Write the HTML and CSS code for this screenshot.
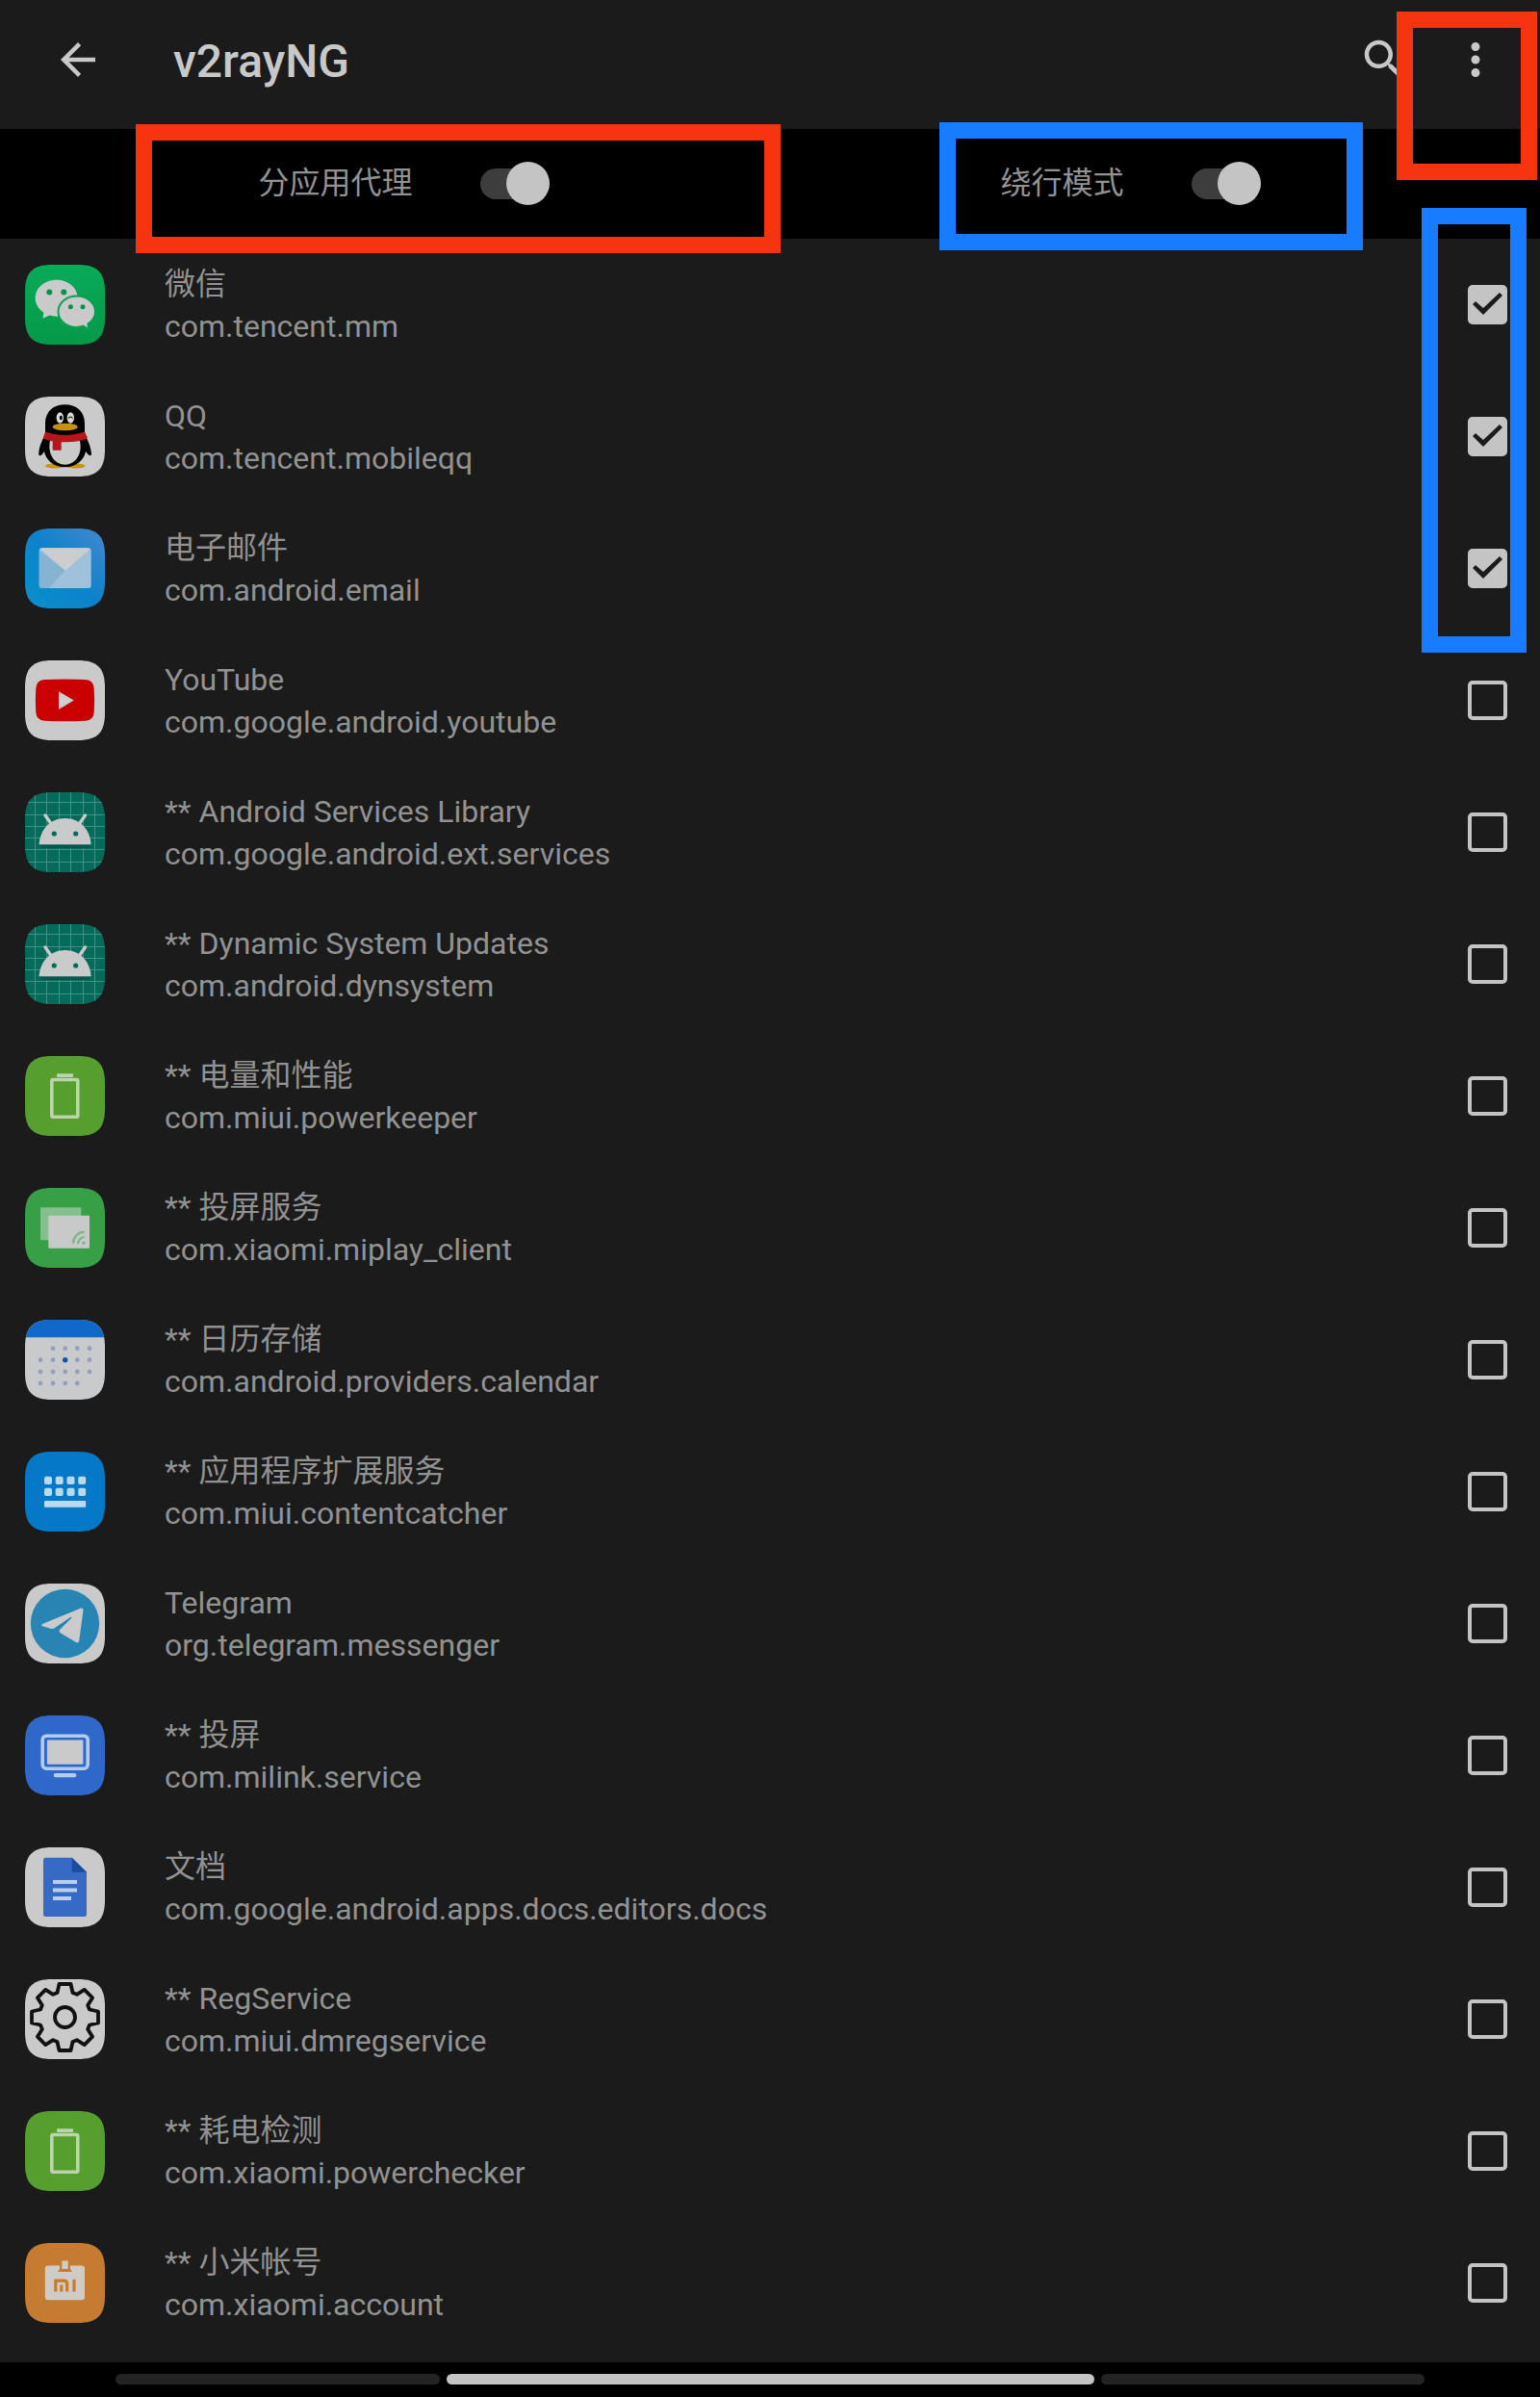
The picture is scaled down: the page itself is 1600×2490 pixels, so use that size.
FILE: index.html
```html
<!DOCTYPE html>
<html lang="zh-CN">
<head>
<meta charset="utf-8">
<meta name="viewport" content="width=device-width, initial-scale=1">
<title>v2rayNG</title>
<link rel="stylesheet" href="styles.css">
</head>
<body>
<svg class="defs" aria-hidden="true">
  <defs>
    <linearGradient id="wechat-bg" x1="0" y1="0" x2="0" y2="1"><stop offset="0" stop-color="#07ab58"/><stop offset="1" stop-color="#05994a"/></linearGradient>
    <linearGradient id="mail-bg" x1="0" y1="1" x2="1" y2="0"><stop offset="0" stop-color="#0a90cb"/><stop offset="0.5" stop-color="#0c82cb"/><stop offset="1" stop-color="#4688cc"/></linearGradient>
    <clipPath id="tile-clip"><path d="M0 28C0 8 8 0 28 0H55C75 0 83 8 83 28V55C83 75 75 83 55 83H28C8 83 0 75 0 55Z"/></clipPath>
  </defs>
  <symbol id="tile" viewBox="0 0 83 83"><path d="M0 28C0 8 8 0 28 0H55C75 0 83 8 83 28V55C83 75 75 83 55 83H28C8 83 0 75 0 55Z"/></symbol>
  <symbol id="android" viewBox="0 0 83 83">
    <g clip-path="url(#tile-clip)">
      <path fill="#046b5b" d="M0 0H83V83H0Z"/>
      <path stroke="#3f9183" stroke-width="1" d="M10.5 0V83M22.5 0V83M35.5 0V83M47.5 0V83M60.5 0V83M72.5 0V83M0 10.5H83M0 23.5H83M0 35.5H83M0 47.5H83M0 59.5H83M0 72.5H83"/>
      <path fill="#04594c" d="M15 54.3H68.5L66 58H18Z"/>
    </g>
    <path fill="#c9caca" d="M14.6 54.3C15.5 38 27 27 41.6 27S67.7 38 68.6 54.3Z"/>
    <path stroke="#c9caca" stroke-width="3.4" stroke-linecap="round" d="M21 24L28 34M62.5 24L55.5 34"/>
    <circle cx="30.3" cy="43" r="2.6" fill="#046b5b"/><circle cx="52.7" cy="43" r="2.6" fill="#046b5b"/>
  </symbol>
  <symbol id="battery" viewBox="0 0 83 83">
    <use href="#tile" fill="#569f2f"/>
    <rect x="27.8" y="24.5" width="27" height="38.8" rx="1.5" fill="none" stroke="#bcd3ae" stroke-width="3.6"/>
    <rect x="33" y="18.3" width="17" height="3.6" rx="1" fill="#bcd3ae"/>
  </symbol>
</svg>

<header class="app-bar">
  <button class="icon-button" type="button" aria-label="返回"><svg viewBox="0 0 24 24"><path d="M20 11H7.83l5.59-5.59L12 4l-8 8 8 8 1.41-1.41L7.83 13H20v-2z"/></svg></button>
  <h1 class="title">v2rayNG</h1>
  <button class="icon-button" type="button" aria-label="搜索"><svg viewBox="0 0 24 24"><path d="M15.5 14h-.79l-.28-.27C15.41 12.59 16 11.11 16 9.5 16 5.91 13.09 3 9.5 3S3 5.91 3 9.5 5.91 16 9.5 16c1.61 0 3.09-.59 4.23-1.57l.27.28v.79l5 4.99L20.49 19l-4.99-5zm-6 0C7.01 14 5 11.99 5 9.5S7.01 5 9.5 5 14 7.01 14 9.5 11.99 14 9.5 14z"/></svg></button>
  <button class="icon-button" type="button" aria-label="更多选项"><svg viewBox="0 0 24 24"><path d="M12 8c1.1 0 2-.9 2-2s-.9-2-2-2-2 .9-2 2 .9 2 2 2zm0 2c-1.1 0-2 .9-2 2s.9 2 2 2 2-.9 2-2-.9-2-2-2zm0 6c-1.1 0-2 .9-2 2s.9 2 2 2 2-.9 2-2-.9-2-2-2z"/></svg></button>
  <span class="mark mark-red mark-menu"></span>
</header>

<section class="modes">
  <div class="mode">
    <label class="switch-label">分应用代理<input class="switch" type="checkbox" role="switch" checked></label>
    <span class="mark mark-red mark-proxy"></span>
  </div>
  <div class="mode">
    <label class="switch-label">绕行模式<input class="switch" type="checkbox" role="switch" checked></label>
    <span class="mark mark-blue mark-bypass"></span>
  </div>
</section>

<main class="apps">
  <ul class="app-list">
    <li><label class="app">
      <svg class="app-icon" viewBox="0 0 83 83"><use href="#tile" fill="url(#wechat-bg)"/>
        <path fill="#cacaca" d="M32.7 15.7C20.5 15.7 10.7 24 10.7 34.7C10.7 40.7 14 46 19.3 49.5L18.5 55.7L25.5 52.6C28 53.4 30 53.7 32.7 53.7C45 53.7 54.7 45.5 54.7 34.7S45 15.7 32.7 15.7Z"/>
        <path fill="#cacaca" stroke="#06a151" stroke-width="2" d="M53.7 32.5C43 32.5 34.5 39.5 34.5 48.7S43 65 53.7 65C56 65 58.5 64.6 60.5 63.8L66.5 67.2L65.3 61.5C70 58.5 73 54 73 48.7C73 39.5 64.5 32.5 53.7 32.5Z"/>
        <g fill="#06934a"><circle cx="25.3" cy="28.6" r="3"/><circle cx="40.3" cy="28.6" r="3"/><circle cx="47.4" cy="43.7" r="2.5"/><circle cx="60" cy="43.7" r="2.5"/></g></svg>
      <span class="app-text"><span>微信</span><span>com.tencent.mm</span></span><input class="check" type="checkbox" checked></label></li>
    <li><label class="app">
      <svg class="app-icon" viewBox="0 0 83 83"><use href="#tile" fill="#cacaca"/>
        <g fill="#c7930f"><ellipse cx="31" cy="72" rx="10" ry="2.4"/><ellipse cx="52.5" cy="72" rx="10" ry="2.4"/></g>
        <path fill="#000" d="M21 40V28C21 15 30 8.3 41.5 8.3S62 15 62 28V40C66 46 69 54 69 60.5C68 62 66 61 63 57C61.5 66 53 73.3 41.5 73.3S21.5 66 20 57C17.5 61 15.5 62 14.3 60.5C14 54 17 46 21 40Z"/>
        <path fill="#cacaca" d="M26 46H57C60 60 52 70.7 41.5 70.7S23 60 26 46Z"/>
        <path fill="#b5151b" d="M21 36.5C34 41 49 41 62 36.5L65 43C61 46 50 47.5 37.7 47.3V55.7H28.7V46.5C25 45.8 21 44.7 18.7 43.3Z"/>
        <g fill="#d8d8d8"><ellipse cx="36.3" cy="22" rx="3.7" ry="5.7"/><ellipse cx="47.3" cy="22" rx="3.7" ry="5.7"/></g>
        <ellipse cx="37.3" cy="22" rx="1.5" ry="2.3"/><path d="M45 22.5Q47.3 19.5 49.6 22.5" fill="none" stroke="#000" stroke-width="1.2"/>
        <ellipse cx="41.7" cy="31.5" rx="13" ry="3.8" fill="#c7930f"/></svg>
      <span class="app-text"><span>QQ</span><span>com.tencent.mobileqq</span></span><input class="check" type="checkbox" checked></label></li>
    <li><label class="app">
      <svg class="app-icon" viewBox="0 0 83 83"><use href="#tile" fill="url(#mail-bg)"/>
        <rect x="14.7" y="20.3" width="54" height="41.7" rx="3" fill="#a0c1dc"/>
        <path fill="#85b3d1" d="M15 23L41.7 43.7L24.5 62H17.7Q14.7 62 14.7 59Z"/>
        <path fill="#cccdcf" d="M16 21.2Q16.8 20.3 18 20.3H65.5Q66.7 20.3 67.5 21.2L41.7 43.7Z"/></svg>
      <span class="app-text"><span>电子邮件</span><span>com.android.email</span></span><input class="check" type="checkbox" checked></label></li>
    <li><label class="app">
      <svg class="app-icon" viewBox="0 0 83 83"><use href="#tile" fill="#cacaca"/>
        <path fill="#ca0000" d="M20 20Q41.5 19 63 20Q71 20.5 71.7 29Q72.6 41 71.7 54Q71 62 63 62.7Q41.5 63.8 20 62.7Q12 62 11.3 54Q10.4 41 11.3 29Q12 20.5 20 20Z"/><path fill="#cfcfcf" d="M35 32.3L50.7 41.5L35 51Z"/></svg>
      <span class="app-text"><span>YouTube</span><span>com.google.android.youtube</span></span><input class="check" type="checkbox"></label></li>
    <li><label class="app">
      <svg class="app-icon" viewBox="0 0 83 83"><use href="#android"/></svg>
      <span class="app-text"><span>** Android Services Library</span><span>com.google.android.ext.services</span></span><input class="check" type="checkbox"></label></li>
    <li><label class="app">
      <svg class="app-icon" viewBox="0 0 83 83"><use href="#android"/></svg>
      <span class="app-text"><span>** Dynamic System Updates</span><span>com.android.dynsystem</span></span><input class="check" type="checkbox"></label></li>
    <li><label class="app">
      <svg class="app-icon" viewBox="0 0 83 83"><use href="#battery"/></svg>
      <span class="app-text"><span>** 电量和性能</span><span>com.miui.powerkeeper</span></span><input class="check" type="checkbox"></label></li>
    <li><label class="app">
      <svg class="app-icon" viewBox="0 0 83 83"><use href="#tile" fill="#379f45"/>
        <rect x="16" y="20.3" width="42.3" height="34" rx="1" fill="#84c08d"/><rect x="24.3" y="28.7" width="42.7" height="34" rx="1" fill="#c8c9c9"/>
        <path fill="none" stroke="#7db588" stroke-width="2.2" d="M50 57.5C50 51 55 46 61.7 45.7M55 58C55 54.5 58 51.3 61.7 51"/><circle cx="61" cy="57.3" r="1.7" fill="#7db588"/></svg>
      <span class="app-text"><span>** 投屏服务</span><span>com.xiaomi.miplay_client</span></span><input class="check" type="checkbox"></label></li>
    <li><label class="app">
      <svg class="app-icon" viewBox="0 0 83 83"><g clip-path="url(#tile-clip)"><path fill="#c9cacb" d="M0 0H83V83H0Z"/><path fill="#1069c9" d="M0 0H83V18.3H0Z"/></g>
        <path stroke="#929fbd" stroke-width="4.8" stroke-linecap="round" d="M29 29.7h.01M41.7 29.7h.01M54.3 29.7h.01M67 29.7h.01M16 41.7h.01M29 41.7h.01M54.3 41.7h.01M67 41.7h.01M16 54h.01M29 54h.01M41.7 54h.01M54.3 54h.01M67 54h.01M16 66h.01M29 66h.01M41.7 66h.01M54.3 66h.01"/><circle cx="41.7" cy="41.7" r="2.7" fill="#1552ad"/></svg>
      <span class="app-text"><span>** 日历存储</span><span>com.android.providers.calendar</span></span><input class="check" type="checkbox"></label></li>
    <li><label class="app">
      <svg class="app-icon" viewBox="0 0 83 83"><use href="#tile" fill="#0579c8"/>
        <g fill="#b9d9ec"><rect x="20" y="25.7" width="8" height="8.3" rx="2"/><rect x="31.7" y="25.7" width="8" height="8.3" rx="2"/><rect x="43.5" y="25.7" width="8" height="8.3" rx="2"/><rect x="55.2" y="25.7" width="8" height="8.3" rx="2"/><rect x="20" y="37.7" width="8" height="8.3" rx="2"/><rect x="31.7" y="37.7" width="8" height="8.3" rx="2"/><rect x="43.5" y="37.7" width="8" height="8.3" rx="2"/><rect x="55.2" y="37.7" width="8" height="8.3" rx="2"/><rect x="20" y="51" width="43.2" height="6.8" rx="1"/></g></svg>
      <span class="app-text"><span>** 应用程序扩展服务</span><span>com.miui.contentcatcher</span></span><input class="check" type="checkbox"></label></li>
    <li><label class="app">
      <svg class="app-icon" viewBox="0 0 83 83"><use href="#tile" fill="#cacaca"/><circle cx="41.5" cy="41.5" r="35.7" fill="#2784b3"/>
        <path fill="#cbcbcb" d="M18 42L57.5 25.8Q60.8 24.8 60.5 28L56.2 59.5Q55.5 62.5 52.5 60.8L37 51.5Q34.5 49.8 36.5 47.5L48.5 35.5Q49 34.3 47.5 34.8L31 46Q29 47.3 26.5 46.7L18 44.3Q16.3 43.3 18 42Z"/></svg>
      <span class="app-text"><span>Telegram</span><span>org.telegram.messenger</span></span><input class="check" type="checkbox"></label></li>
    <li><label class="app">
      <svg class="app-icon" viewBox="0 0 83 83"><use href="#tile" fill="#3068ca"/>
        <rect x="18.2" y="21.2" width="47" height="34" rx="4" fill="none" stroke="#b3cbee" stroke-width="3.6"/><rect x="22.9" y="25.5" width="37.5" height="25.2" rx="1" fill="#cacaca"/><rect x="29.7" y="60" width="23.6" height="4.3" rx="2" fill="#b3cbee"/></svg>
      <span class="app-text"><span>** 投屏</span><span>com.milink.service</span></span><input class="check" type="checkbox"></label></li>
    <li><label class="app">
      <svg class="app-icon" viewBox="0 0 83 83"><use href="#tile" fill="#cacaca"/>
        <path fill="#366ac4" d="M21.5 10.7H48.7L64 25.7V69.5Q64 72 61.5 72H21.5Q19 72 19 69.5V13.2Q19 10.7 21.5 10.7Z"/><path fill="#1c4c9f" d="M48.7 10.7L64 25.7H48.7Z"/><path stroke="#b9cff0" stroke-width="3.8" d="M29 36H54M29 44.5H54M29 53H48"/></svg>
      <span class="app-text"><span>文档</span><span>com.google.android.apps.docs.editors.docs</span></span><input class="check" type="checkbox"></label></li>
    <li><label class="app">
      <svg class="app-icon" viewBox="0 0 83 83"><use href="#tile" fill="#cacaca"/>
        <g transform="translate(41.5 39.5)" fill="none" stroke="#111" stroke-width="3.8" stroke-linejoin="round"><path d="M-6 -34.5H6L8 -25.5L12.4 -23.7L20.2 -28.6L28.6 -20.2L23.7 -12.4L25.5 -8L34.5 -6V6L25.5 8L23.7 12.4L28.6 20.2L20.2 28.6L12.4 23.7L8 25.5L6 34.5H-6L-8 25.5L-12.4 23.7L-20.2 28.6L-28.6 20.2L-23.7 12.4L-25.5 8L-34.5 6V-6L-25.5 -8L-23.7 -12.4L-28.6 -20.2L-20.2 -28.6L-12.4 -23.7L-8 -25.5Z"/><circle r="10.5"/></g></svg>
      <span class="app-text"><span>** RegService</span><span>com.miui.dmregservice</span></span><input class="check" type="checkbox"></label></li>
    <li><label class="app">
      <svg class="app-icon" viewBox="0 0 83 83"><use href="#battery"/></svg>
      <span class="app-text"><span>** 耗电检测</span><span>com.xiaomi.powerchecker</span></span><input class="check" type="checkbox"></label></li>
    <li><label class="app">
      <svg class="app-icon" viewBox="0 0 83 83"><use href="#tile" fill="#c57c30"/>
        <rect x="20.8" y="23.5" width="41.2" height="35.8" rx="3" fill="#cfcbc6"/><path fill="#c57c30" d="M36 23H47V27L49 30H34L36 27Z"/><path fill="#cfcbc6" d="M38.3 18.5H44.7V27H38.3Z"/>
        <path fill="none" stroke="#c57c30" stroke-width="3.2" d="M31.800 50.500V39.200H40.500Q43.700 39.200 43.700 42.500V50.500M37.800 43.500V50.500M51 37.800V50.500"/></svg>
      <span class="app-text"><span>** 小米帐号</span><span>com.xiaomi.account</span></span><input class="check" type="checkbox"></label></li>
  </ul>
  <span class="mark mark-blue mark-checks"></span>
</main>

<footer class="nav-bar"><span class="nav-pill"></span><span class="nav-pill nav-pill-active"></span><span class="nav-pill"></span></footer>
</body>
</html>
```
FILE: styles.css
```css
* {
  box-sizing: border-box;
}

body {
  margin: 0;
  min-height: 100vh;
  display: flex;
  flex-direction: column;
  background: #000;
  color: #929292;
  font: 400 32px/44px Roboto, "Noto Sans CJK SC", sans-serif;
}

.defs {
  position: absolute;
  width: 0;
  height: 0;
}

/* App bar */
.app-bar {
  position: relative;
  display: flex;
  align-items: center;
  padding: 33px 40px 43px 54px;
  background: #1b1b1b;
}

.icon-button {
  width: 54px;
  height: 54px;
  padding: 0;
  border: 0;
  background: none;
  color: #c8c8c8;
}

.icon-button svg {
  display: block;
  width: 54px;
  height: 54px;
  fill: currentColor;
}

.icon-button + .icon-button {
  margin-left: 41px;
}

.title {
  flex: 1;
  margin: 4px 0 0 72px;
  color: #c8c8c8;
  font-size: 48px;
  font-weight: 500;
  line-height: 54px;
}

/* Mode switches */
.modes {
  display: grid;
  grid-template-columns: 1fr 1fr;
  padding: 0 48px 0 42px;
}

.mode {
  position: relative;
  display: flex;
  justify-content: center;
  padding: 34px 0 35px;
}

.switch-label {
  display: flex;
  align-items: center;
  gap: 70px;
  line-height: 45px;
}

.switch {
  appearance: none;
  position: relative;
  width: 72px;
  height: 32px;
  margin: 0;
  border-radius: 16px;
  background: #3d3d3d;
}

.switch::before {
  content: "";
  position: absolute;
  top: -7px;
  left: 0;
  width: 45px;
  height: 45px;
  border-radius: 50%;
  background: #c4c4c4;
}

.switch:checked::before {
  left: auto;
  right: 0;
}

/* App list */
.apps {
  position: relative;
  flex: 1;
  padding-bottom: 12px;
  background: #1b1b1b;
}

.app-list {
  margin: 0;
  padding: 0;
  list-style: none;
}

.app {
  display: flex;
  align-items: center;
  min-height: 137px;
  padding: 0 34px 0 26px;
}

.app-icon {
  flex: none;
  width: 83px;
  height: 83px;
  margin-right: 62px;
}

.app-text {
  flex: 1;
  display: flex;
  flex-direction: column;
}

.check {
  appearance: none;
  flex: none;
  width: 41px;
  height: 41px;
  margin: 0;
  border: 4px solid #c4c4c4;
  border-radius: 5px;
}

.check:checked {
  background: #c4c4c4;
}

.check:checked::before {
  content: "";
  display: block;
  width: 33px;
  height: 33px;
  background: #1b1b1b;
  clip-path: polygon(1px 16px, 4px 13px, 12px 20px, 29px 4px, 32px 7px, 12px 27px);
}

/* Highlight frames */
.mark {
  position: absolute;
  z-index: 1;
  border: 17px solid;
  pointer-events: none;
}

.mark-red {
  border-color: #f63410;
}

.mark-blue {
  border-color: #177cff;
}

.mark-menu {
  top: 12px;
  right: 3px;
  width: 146px;
  height: 175px;
}

.mark-proxy {
  top: -5px;
  left: 99px;
  right: -14px;
  height: 134px;
}

.mark-bypass {
  top: -7px;
  left: 179px;
  right: 136px;
  height: 133px;
}

.mark-checks {
  top: -32px;
  right: 14px;
  width: 109px;
  height: 462px;
}

/* Gesture bar */
.nav-bar {
  display: grid;
  grid-template-columns: 1fr 2fr 1fr;
  gap: 7px;
  padding: 12px 120px 13px;
}

.nav-pill {
  height: 11px;
  border-radius: 6px;
  background: #242424;
}

.nav-pill-active {
  background: #c4c4c4;
}
```
